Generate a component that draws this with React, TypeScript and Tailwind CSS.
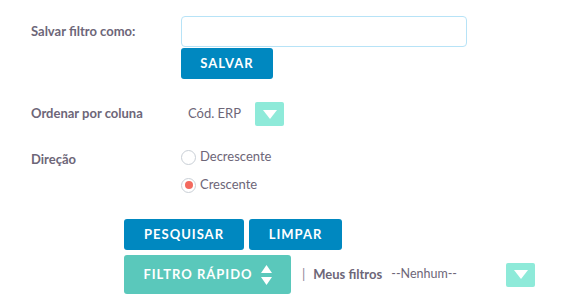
import React from 'react';

const font = { fontFamily: 'Lato, "Open Sans", sans-serif' };

const Arrow: React.FC = () => (
  <div className="w-[29px] h-[24px] bg-[#8eead9] flex items-center justify-center rounded-[2px]">
    <svg width="14" height="9" viewBox="0 0 14 9">
      <path d="M0 0 H14 L7 9 Z" fill="#ffffff" />
    </svg>
  </div>
);

const Radio: React.FC<{ checked?: boolean; label: string }> = ({ checked, label }) => (
  <label className="flex items-center h-[20px]">
    <span className="w-[15px] h-[15px] rounded-full border border-[#c9cfd6] flex items-center justify-center bg-white">
      {checked && <span className="w-[8px] h-[8px] rounded-full bg-[#f36a5f]" />}
    </span>
    <span className="ml-[4px] text-[13px] text-[#6d6678]">{label}</span>
  </label>
);

export default function App() {
  return (
    <div className="w-[570px] h-[300px] bg-white relative overflow-hidden" style={font}>
      {/* Salvar filtro */}
      <div className="flex pl-[31px] pt-[16px]">
        <div className="w-[150px] h-[31px] flex items-center text-[13px] font-bold text-[#6d6678]">
          Salvar filtro como:
        </div>
        <div className="flex flex-col">
          <input className="w-[286px] h-[31px] border border-[#b7e3f7] rounded-[4px] outline-none" />
          <button className="mt-[1px] w-[92px] h-[31px] bg-[#0088c0] rounded-[3px] text-white text-[13px] font-bold tracking-[1px]">
            SALVAR
          </button>
        </div>
      </div>

      {/* Ordenar */}
      <div className="flex pl-[31px] mt-[23px] items-center h-[24px]">
        <div className="w-[157px] text-[13px] font-bold text-[#6d6678]">Ordenar por coluna</div>
        <div className="w-[67px] text-[13px] text-[#6d6678]">Cód. ERP</div>
        <Arrow />
      </div>

      {/* Direção */}
      <div className="flex pl-[31px] mt-[21px]">
        <div className="w-[150px] h-[20px] flex items-center text-[13px] font-bold text-[#6d6678] mt-[3px]">Direção</div>
        <div className="flex flex-col gap-[8px]">
          <Radio label="Decrescente" />
          <Radio checked label="Crescente" />
        </div>
      </div>

      {/* Ações */}
      <div className="pl-[124px] mt-[24px] flex flex-col gap-[5px]">
        <div className="flex gap-[5px]">
          <button className="w-[120px] h-[31px] bg-[#0088c0] rounded-[3px] text-white text-[13px] font-bold tracking-[1px]">
            PESQUISAR
          </button>
          <button className="w-[93px] h-[31px] bg-[#0088c0] rounded-[3px] text-white text-[13px] font-bold tracking-[1px]">
            LIMPAR
          </button>
        </div>
        <div className="flex items-center">
          <button className="w-[167px] h-[39px] bg-[#5ac8bb] rounded-[3px] text-white text-[13px] font-bold tracking-[1px] flex items-center justify-center gap-[8px]">
            FILTRO RÁPIDO
            <svg width="11" height="20" viewBox="0 0 11 20">
              <path d="M5.5 0 L11 8 H0 Z" fill="#ffffff" />
              <path d="M0 12 H11 L5.5 20 Z" fill="#ffffff" />
            </svg>
          </button>
          <span className="ml-[11px] text-[13px] text-[#8a8494]">|</span>
          <span className="ml-[8px] w-[78px] shrink-0 text-[13px] font-bold text-[#6d6678]">Meus filtros</span>
          <span className="w-[115px] shrink-0 text-[12.5px] text-[#6d6678]">--Nenhum--</span>
          <Arrow />
        </div>
      </div>
    </div>
  );
}
